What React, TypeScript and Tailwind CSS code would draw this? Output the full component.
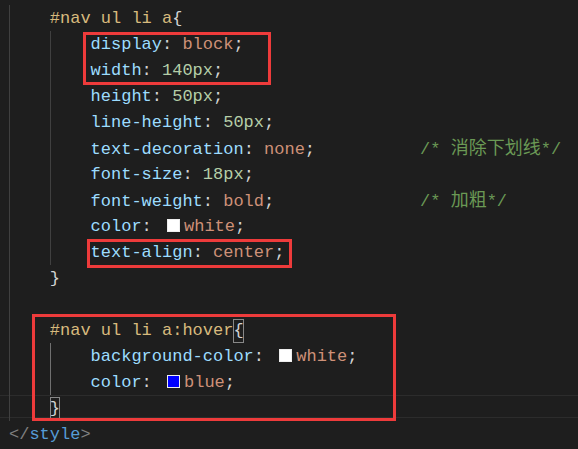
import React from "react";

const SEL = "text-[#d7ba7d]";
const PROP = "text-[#9cdcfe]";
const VAL = "text-[#ce9178]";
const NUM = "text-[#b5cea8]";
const PUN = "text-[#d4d4d4]";
const COM = "text-[#6a9955]";

function Swatch({ color }: { color: string }) {
  return (
    <span
      className="inline-block w-[13px] h-[13px] ml-[5px] mr-[4px] align-[-1px] border-[1.5px] border-[#eeeeee]"
      style={{ backgroundColor: color }}
    />
  );
}

function Guide({ active }: { active?: boolean }) {
  return (
    <span
      className={
        "inline-block w-[40.8px] h-[26px] align-top border-l " +
        (active ? "border-[#707070]" : "border-[#404040]")
      }
    />
  );
}

function Line({
  guides = 0,
  active = false,
  current = false,
  children,
}: {
  guides?: number;
  active?: boolean;
  current?: boolean;
  children?: React.ReactNode;
}) {
  return (
    <div
      className={
        "h-[26px] pl-[9px] whitespace-pre flex items-start " +
        (current ? "shadow-[inset_0_1px_0_#2c2c2c,inset_0_-3px_0_#1e1e1e,inset_0_-4px_0_#2c2c2c]" : "")
      }
    >
      {Array.from({ length: guides }).map((_, i) => (
        <Guide key={i} active={active && i === 1} />
      ))}
      <span className="leading-[26px] pt-[1px]">{children}</span>
    </div>
  );
}

function Comment({ pad, text }: { pad: string; text: string }) {
  return (
    <>
      <span>{pad}</span>
      <span className={COM + " ml-[3px]"}>
        {"/* "}
        <span className="text-[18px]">{text}</span>
        {"*/"}
      </span>
    </>
  );
}

function Decl({ prop, value, cls, comment, swatch }: { prop: string; value: string; cls: string; comment?: React.ReactNode; swatch?: string }) {
  return (
    <>
      <span className={PROP}>{prop}</span>
      <span className={PUN}>: </span>
      {swatch && <Swatch color={swatch} />}
      <span className={cls}>{value}</span>
      <span className={PUN}>;</span>
      {comment}
    </>
  );
}

export default function App() {
  return (
    <div className="relative w-[578px] h-[449px] overflow-hidden bg-[#1e1e1e] text-[17px] font-['Liberation_Mono','Noto_Sans_CJK_SC',monospace]">
      <div className="flex flex-col pt-[5px]">
        <Line guides={1}>
          <span className={SEL}>#nav ul li a</span>
          <span className={PUN}>{"{"}</span>
        </Line>
        <Line guides={2}>
          <Decl prop="display" value="block" cls={VAL} />
        </Line>
        <Line guides={2}>
          <Decl prop="width" value="140px" cls={NUM} />
        </Line>
        <Line guides={2}>
          <Decl prop="height" value="50px" cls={NUM} />
        </Line>
        <Line guides={2}>
          <Decl prop="line-height" value="50px" cls={NUM} />
        </Line>
        <Line guides={2}>
          <Decl prop="text-decoration" value="none" cls={VAL} comment={<Comment pad="          " text="消除下划线" />} />
        </Line>
        <Line guides={2}>
          <Decl prop="font-size" value="18px" cls={NUM} />
        </Line>
        <Line guides={2}>
          <Decl prop="font-weight" value="bold" cls={VAL} comment={<Comment pad="              " text="加粗" />} />
        </Line>
        <Line guides={2}>
          <Decl prop="color" value="white" cls={VAL} swatch="#ffffff" />
        </Line>
        <Line guides={2}>
          <Decl prop="text-align" value="center" cls={VAL} />
        </Line>
        <Line guides={1}>
          <span className={PUN}>{"}"}</span>
        </Line>
        <Line guides={1} />
        <Line guides={1}>
          <span className={SEL}>#nav ul li a:hover</span>
          <span className={PUN + " inline-block leading-[24px] shadow-[inset_0_0_0_1px_#888888]"}>{"{"}</span>
        </Line>
        <Line guides={2} active>
          <Decl prop="background-color" value="white" cls={VAL} swatch="#ffffff" />
        </Line>
        <Line guides={2} active>
          <Decl prop="color" value="blue" cls={VAL} swatch="#0000ff" />
        </Line>
        <Line guides={1} current>
          <span className={PUN + " inline-block leading-[24px] shadow-[inset_0_0_0_1px_#888888]"}>{"}"}</span>
        </Line>
        <div className="h-[26px] pl-[9px] leading-[26px] pt-[1px] whitespace-pre">
          <span className="text-[#808080]">{"</"}</span>
          <span className="text-[#569cd6]">style</span>
          <span className="text-[#808080]">{">"}</span>
        </div>
      </div>

      {/* annotation boxes drawn over the code */}
      <div className="absolute left-[83px] top-[32px] w-[188px] h-[53px] border-[3px] border-[#ee3b3b]" />
      <div className="absolute left-[87px] top-[239px] w-[205px] h-[29px] border-[3px] border-[#ee3b3b]" />
      <div className="absolute left-[32px] top-[314px] w-[364px] h-[107px] border-[3px] border-[#ee3b3b]" />
    </div>
  );
}
